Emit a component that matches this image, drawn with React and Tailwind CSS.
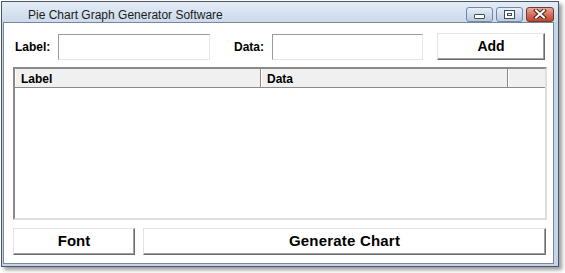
import React from 'react';

const font = "font-['Liberation_Sans',Arial,sans-serif]";

const raised =
  'border border-t-[#e3e3e3] border-l-[#e3e3e3] border-r-[#6b6b6b] border-b-[#6b6b6b] shadow-[inset_-1px_-1px_0_#a0a0a0] bg-white';
const sunkenInput =
  'border border-t-[#9a9a9a] border-l-[#9a9a9a] border-r-[#e6e6e6] border-b-[#e6e6e6] bg-white';

const CaptionButton = ({ kind }) => {
  if (kind === 'close') {
    return (
      <div className="w-[28px] h-[15px] rounded-[3px] border border-[#6f3a33] bg-gradient-to-b from-[#e8a898] via-[#d6705c] to-[#c4432c] flex items-center justify-center">
        <svg width="14" height="10" viewBox="0 0 14 10">
          <path d="M3 1.5 L11 8.5 M11 1.5 L3 8.5" stroke="#4a2420" strokeWidth="4" strokeLinecap="square" />
          <path d="M3 1.5 L11 8.5 M11 1.5 L3 8.5" stroke="#ffffff" strokeWidth="2" strokeLinecap="square" />
        </svg>
      </div>
    );
  }
  return (
    <div className="w-[27px] h-[15px] rounded-[3px] border border-[#7487a0] bg-gradient-to-b from-[#e6eef8] via-[#cfdcec] to-[#b9cbe2] flex items-center justify-center">
      {kind === 'min' ? (
        <div className="mt-[5px] w-[11px] h-[5px] rounded-[1px] border border-[#3f4c60] bg-white" />
      ) : (
        <div className="w-[11px] h-[9px] border border-[#3f4c60] bg-white flex items-center justify-center">
          <div className="w-[5px] h-[3px] border border-[#3f4c60]" />
        </div>
      )}
    </div>
  );
};

const Button = ({ children, className }) => (
  <button className={`${raised} h-[27px] flex items-center justify-center font-bold text-[14px] text-black ${className}`}>
    {children}
  </button>
);

const HeaderCell = ({ children, className }) => (
  <div
    className={`h-full flex items-center pl-[5px] pt-[2px] border-l border-l-white border-r border-r-[#8a8a8a] font-bold text-[12px] text-black ${className}`}
  >
    {children}
  </div>
);

export default function App() {
  return (
    <div className={`${font} w-[565px] h-[273px] bg-white pt-[1px] pl-[1px] overflow-hidden`}>
      <div className="w-[558px] h-[266px] border border-[#4b5668] bg-[#c4d5e9] shadow-[3px_3px_4px_rgba(0,0,0,0.4)] flex flex-col pl-[1px] pr-[4px] pb-[2px]">
        {/* Title bar */}
        <div className="h-[20px] shrink-0 -ml-[1px] -mr-[4px] pl-[26px] pr-[4px] flex items-center justify-between bg-gradient-to-b from-[#e4ecf6] to-[#cbdaec]">
          <span className="text-[12px] text-[#1b1b1b] mt-[5px]">Pie Chart Graph Generator Software</span>
          <div className="flex items-center gap-[3px] mt-[4px]">
            <CaptionButton kind="min" />
            <CaptionButton kind="max" />
            <CaptionButton kind="close" />
          </div>
        </div>

        {/* Client area */}
        <div className="flex-1 border border-[#7d8796] bg-white pl-[9px] pr-[6px] pt-[10px] flex flex-col">
          <div className="flex items-center h-[27px]">
            <div className="w-[45px] pl-[2px] font-bold text-[12px] text-black">Label:</div>
            <div className={`${sunkenInput} w-[152px] h-[26px]`} />
            <div className="ml-[24px] w-[38px] font-bold text-[12px] text-black">Data:</div>
            <div className={`${sunkenInput} w-[151px] h-[26px]`} />
            <Button className="ml-[14px] w-[108px]">Add</Button>
          </div>

          <div className="mt-[7px] w-[534px] h-[153px] border-2 border-t-[#8a8a8a] border-l-[#8a8a8a] border-r-[#dedede] border-b-[#dedede] bg-white flex flex-col">
            <div className="h-[19px] bg-[#f0f0f0] border-b border-b-[#8a8a8a] flex">
              <HeaderCell className="w-[246px]">Label</HeaderCell>
              <HeaderCell className="w-[247px]">Data</HeaderCell>
              <HeaderCell className="flex-1 border-r-0"></HeaderCell>
            </div>
          </div>

          <div className="mt-[8px] flex gap-[8px]">
            <Button className="w-[122px] text-[15px]">Font</Button>
            <Button className="w-[403px] text-[15px] tracking-[0.2px]">Generate Chart</Button>
          </div>
        </div>
      </div>
    </div>
  );
}
